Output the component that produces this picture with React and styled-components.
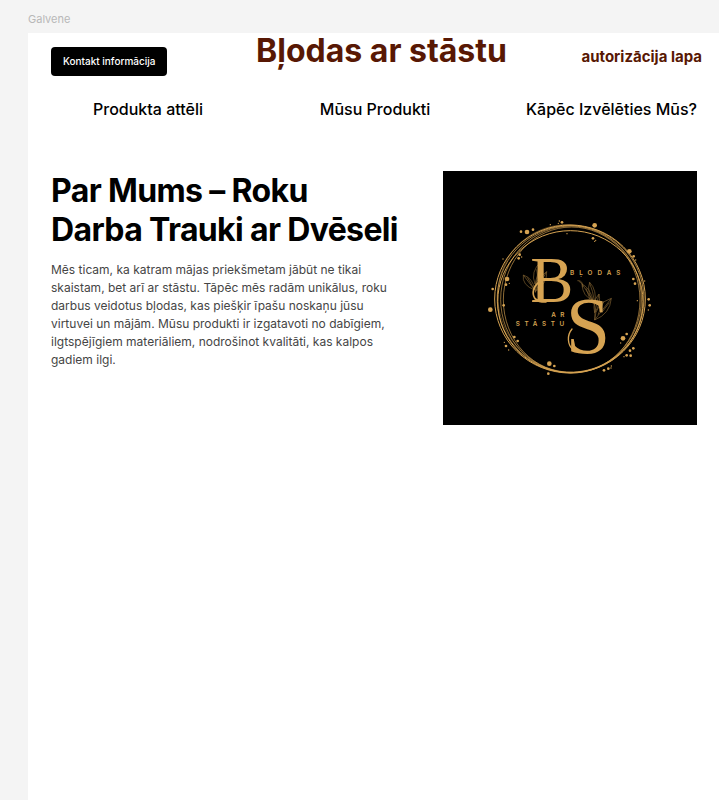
import React from "react";
import styled, { createGlobalStyle } from "styled-components";

const GlobalStyle = createGlobalStyle`
  * { box-sizing: border-box; }
  body {
    margin: 0;
    background: #f4f4f4;
    font-family: Inter, sans-serif;
    color: #000;
  }
`;

const Canvas = styled.div`
  display: flex;
  flex-direction: column;
  min-height: 100vh;
  padding-left: 28px;
`;

const FrameLabel = styled.div`
  height: 33px;
  padding-top: 12px;
  font-size: 11px;
  line-height: 14px;
  color: #b8b8b8;
`;

const Frame = styled.div`
  flex: 1;
  background: #fff;
`;

const Header = styled.header`
  display: grid;
  grid-template-columns: 41fr auto 39fr;
  align-items: start;
  padding: 0 17px 0 23px;
`;

const ContactButton = styled.button`
  justify-self: start;
  margin-top: 14px;
  padding: 0 12px;
  height: 29px;
  border: 0;
  border-radius: 4px;
  background: #000;
  color: #fff;
  font: 500 10px/15px Inter, sans-serif;
  white-space: nowrap;
`;

const Brand = styled.div`
  font-size: 32px;
  line-height: 35px;
  font-weight: 700;
  color: #581804;
  white-space: nowrap;
`;

const LoginLink = styled.a`
  justify-self: end;
  margin-top: 14px;
  font-size: 15px;
  line-height: 19px;
  font-weight: 700;
  color: #581804;
  text-decoration: none;
  white-space: nowrap;
`;

const Nav = styled.nav`
  display: grid;
  grid-template-columns: 11fr 10fr auto;
  padding: 21px 22px 0 65px;
`;

const NavLink = styled.a`
  justify-self: start;
  font-size: 16px;
  line-height: 24px;
  font-weight: 500;
  color: #000;
  text-decoration: none;
`;

const About = styled.section`
  display: flex;
  align-items: flex-start;
  justify-content: space-between;
  gap: 40px;
  padding: 50px 22px 0 23px;
`;

const Copy = styled.div`
  flex: 1;
`;

const Title = styled.h1`
  margin: 0;
  font-size: 32px;
  line-height: 39px;
  font-weight: 700;
  letter-spacing: -0.02em;
`;

const Text = styled.p`
  margin: 12px 0 0;
  font-size: 12px;
  line-height: 18px;
  color: #454545;
`;

const Logo = styled.svg`
  flex: none;
  width: 254px;
  height: 254px;
  background: #000;
`;

const Initial = styled.text`
  font-family: "Liberation Serif", serif;
`;

const Wordmark = styled.text`
  font-family: Inter, sans-serif;
  font-size: 19px;
  font-weight: 600;
  letter-spacing: ${({ $tracking }) => $tracking}px;
`;

const GOLD = "#d6a352";

const DOTS = [
  [123, 65, 4], [141, 66, 7], [159, 59, 4], [211, 44, 2], [235, 40, 2], [238, 33, 2],
  [246, 37, 4], [344, 46, 7], [261, 71, 2], [339, 85, 4], [347, 91, 2], [344, 94, 2],
  [119, 134, 4], [125, 141, 2], [116, 145, 4], [69, 147, 2], [81, 207, 7], [78, 224, 4],
  [88, 220, 2], [38, 237, 4], [31, 299, 7], [71, 286, 4], [103, 381, 4], [113, 393, 4],
  [73, 397, 2], [78, 408, 4], [86, 420, 2], [208, 461, 7], [223, 468, 4], [205, 491, 4],
  [448, 124, 7], [461, 139, 4], [467, 150, 2], [460, 207, 4], [465, 221, 4], [494, 213, 2],
  [472, 272, 2], [506, 268, 4], [509, 286, 4], [505, 300, 2], [429, 385, 7], [440, 372, 4],
  [422, 399, 2], [460, 415, 4], [450, 422, 4], [452, 437, 4], [440, 436, 4], [432, 440, 2],
  [372, 481, 4], [385, 476, 4], [394, 468, 2], [393, 474, 2],
];

const RINGS = [
  [270, 267, 226, 222, 0, 3],
  [271, 266, 220, 220, 20, 2],
  [273, 268, 211, 220, 0, 2],
  [271, 275, 218, 213, 0, 3],
  [268, 267, 224, 214, 60, 1],
  [275, 270, 205, 219, 0, 2],
];

function BrandLogo() {
  return (
    <Logo viewBox="0 0 762 762" role="img" aria-label="Bļodas ar stāstu">
      <g transform="translate(111 117)" fill={GOLD}>
        <g fill="none" stroke={GOLD}>
          {RINGS.map(([cx, cy, rx, ry, turn, w], i) => (
            <ellipse key={i} cx={cx} cy={cy} rx={rx} ry={ry} strokeWidth={w}
              transform={`rotate(${turn} 270 268)`} />
          ))}
        </g>
        {DOTS.map(([x, y, r], i) => <circle key={i} cx={x} cy={y} r={r} />)}
        <g fill="none" stroke={GOLD} strokeWidth="2" opacity="0.6">
          <path d="M166 248Q168 198 188 155M165 222Q150 185 183 155Q194 190 165 222M165 222L183 155" />
          <path d="M164 240Q125 225 130 195Q160 205 164 240M164 240L130 195M164 240L142 202" />
          <path d="M166 245Q170 205 200 185Q202 220 166 245M166 245L200 185M175 215L170 178" />
          <path d="M344 330Q350 270 328 217M338 270Q308 260 306 222Q332 235 340 275M338 270L306 222" />
          <path d="M344 285Q318 245 329 217Q352 240 344 285M318 235L330 268" />
          <path d="M344 330Q346 280 394 265Q390 312 344 330M344 330L394 265M354 314L372 273M365 308L388 278" />
          <path d="M344 308Q336 275 357 252Q364 280 344 308M344 308L357 252" />
          <path d="M292 212Q310 210 307 232M296 213L310 225" />
        </g>
        <Initial x="151" y="276" fontSize="194">B</Initial>
        <path
          d="M178 216C160 228 155 250 164 264C172 275 182 276 198 276"
          fill="none" stroke={GOLD} strokeWidth="5" strokeLinecap="round"
        />
        <Initial x="257" y="428" fontSize="240">S</Initial>
        <path
          d="M276 357C260 376 262 405 280 420"
          fill="none" stroke={GOLD} strokeWidth="4" strokeLinecap="round"
        />
        <Wordmark x="270" y="196" $tracking={15}>BĻODAS</Wordmark>
        <Wordmark x="214" y="320" $tracking={13}>AR</Wordmark>
        <Wordmark x="107" y="348" $tracking={14}>STĀSTU</Wordmark>
      </g>
    </Logo>
  );
}

export default function App() {
  return (
    <>
      <GlobalStyle />
      <Canvas>
        <FrameLabel>Galvene</FrameLabel>
        <Frame>
          <Header>
            <ContactButton type="button">Kontakt informācija</ContactButton>
            <Brand>Bļodas ar stāstu</Brand>
            <LoginLink href="#login">autorizācija lapa</LoginLink>
          </Header>
          <Nav>
            <NavLink href="#gallery">Produkta attēli</NavLink>
            <NavLink href="#products">Mūsu Produkti</NavLink>
            <NavLink href="#why">Kāpēc Izvēlēties Mūs?</NavLink>
          </Nav>
          <About>
            <Copy>
              <Title>Par Mums – Roku Darba Trauki ar Dvēseli</Title>
              <Text>
                Mēs ticam, ka katram mājas priekšmetam jābūt ne tikai skaistam, bet arī ar
                stāstu. Tāpēc mēs radām unikālus, roku darbus veidotus bļodas, kas piešķir
                īpašu noskaņu jūsu virtuvei un mājām. Mūsu produkti ir izgatavoti no
                dabīgiem, ilgtspējīgiem materiāliem, nodrošinot kvalitāti, kas kalpos
                gadiem ilgi.
              </Text>
            </Copy>
            <BrandLogo />
          </About>
        </Frame>
      </Canvas>
    </>
  );
}
